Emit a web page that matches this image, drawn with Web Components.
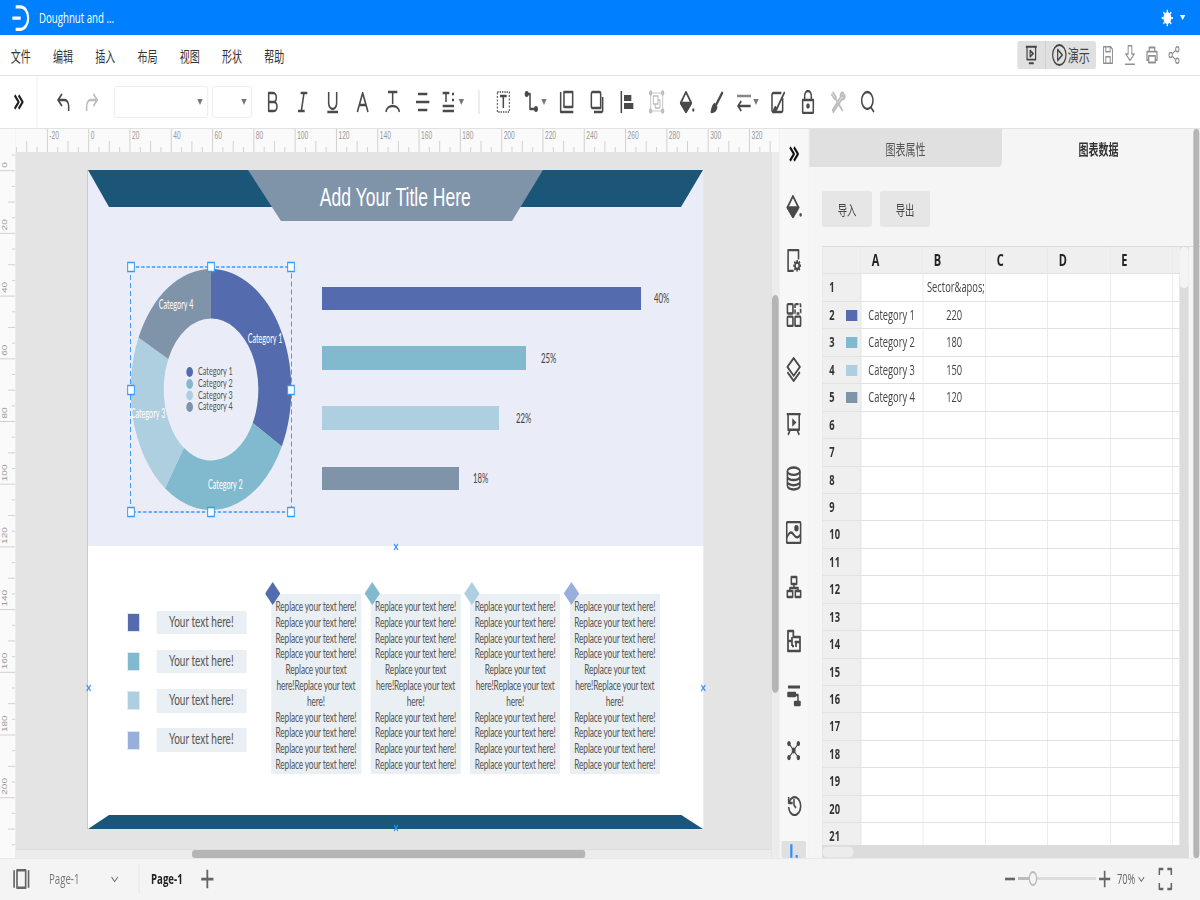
<!DOCTYPE html>
<html lang="zh">
<head>
<meta charset="utf-8">
<title>Doughnut and ...</title>
<style>
	html, body { margin: 0; width: 1200px; height: 900px; overflow: hidden; background: #f4f4f4; }
</style>
</head>
<body>
<app-root></app-root>
<script>
// the whole ui is laid out 1800 wide and squeezed to 1200 by .stage in app-root
const UI_FONT = '"Open Sans","Noto Sans CJK SC",sans-serif';

const ICONS = {
	logo: '<path d="M6 3h6a9 9 0 0 1 0 18H6M2 12h10" stroke-width="2.6"/>',
	sun: '<circle cx="12" cy="12" r="6" fill="currentColor"/><path d="M12 2v3M12 19v3M2 12h3M19 12h3M5 5l2 2M17 17l2 2M19 5l-2 2M7 17l-2 2"/>',
	present: '<path d="M3 3h18M5 3v14h14V3M10 7l5 3.5-5 3.5zM8 21h8"/>',
	play: '<circle cx="12" cy="12" r="10"/><path d="M9.5 6.5l7 5.5-7 5.5z"/>',
	save: '<path d="M4 2h13l3 3v17H4zM8 2v6h8V2M8 22v-8h8v8"/>',
	download: '<path d="M9 2h6v9h4l-7 7-7-7h4zM4 22h16"/>',
	print: '<path d="M7 8V3h10v5M5 18H3V8h18v10h-2M6 13h12v8H6z"/>',
	share: '<circle cx="18" cy="5" r="3"/><circle cx="6" cy="12" r="3"/><circle cx="18" cy="19" r="3"/><path d="M9 10.5l6-4M9 13.5l6 4"/>',
	collapse: '<path d="M4 3l8 9-8 9M12 3l8 9-8 9" stroke-width="3.6"/>',
	undo: '<path d="M10 4l-6 6 6 6M4 10h10a6 6 0 0 1 6 6v5"/>',
	redo: '<path d="M14 4l6 6-6 6M20 10H10a6 6 0 0 0-6 6v5"/>',
	bold: '<path d="M6 3h7a4.500 4.500 0 0 1 0 9H6zM6 12h8a4.500 4.500 0 0 1 0 9H6z"/>',
	italic: '<path d="M9 3h10M5 21h10M14 3l-4 18"/>',
	underline: '<path d="M6 2v11a6 6 0 0 0 12 0V2M4 22h16"/>',
	letter: '<path d="M4 22L12 3l8 19M7 15h10"/>',
	textcolor: '<path d="M5 2h14M12 2v12M2 22c1-8 19-8 20 0"/>',
	align: '<path d="M5 4h14M2 12h20M5 20h14"/>',
	textspace: '<path d="M2 3h10M7 3v9M16 4h3M16 10h3M2 16h17M2 21h17"/>',
	textbox: '<path d="M3 2h18v20H3z" stroke-dasharray="2 1.500" stroke-width="1.500"/><path d="M7 6h10M12 6v12"/>',
	connector: '<path d="M4 4h5v15h8"/><circle cx="4" cy="4" r="1.800" fill="currentColor"/><circle cx="18" cy="19" r="1.800" fill="currentColor"/>',
	front: '<path d="M3 2v20h19M8 2h13v15H8z"/>',
	back: '<path d="M4 4a2 2 0 0 1 2-2h10a2 2 0 0 1 2 2v14H6a2 2 0 0 1-2-2zM8 22h11a2 2 0 0 0 2-2V7"/>',
	alignleft: '<path d="M4 1v22"/><path d="M8 5h11v6H8zM8 13h14v6H8z" fill="currentColor" stroke="none"/>',
	group: '<path d="M4 3h16M4 21h16M3 4v16M21 4v16" stroke-width="1"/><path d="M7 6h7v8H7zM10 14v4h7v-8h-3" stroke-width="1.500"/><circle cx="3" cy="3" r="1.500"/><circle cx="21" cy="3" r="1.500"/><circle cx="3" cy="21" r="1.500"/><circle cx="21" cy="21" r="1.500"/>',
	bucket: '<path d="M11 2L3 13l8 9 8-9z"/><path d="M3 13h16l-8 9z" fill="currentColor"/><circle cx="22" cy="20" r="1.800" fill="currentColor" stroke="none"/>',
	brush: '<path d="M21 2L11 15" stroke-width="3"/><path d="M9 14c-3 1-4 4-5 8 3 0 7-1 8-5z" fill="currentColor"/>',
	arrows: '<path d="M2 6h20" stroke-dasharray="2 1"/><path d="M22 16H3M8 11l-5 5 5 5"/>',
	nofill: '<path d="M19 8v12a2 2 0 0 1-2 2H5a2 2 0 0 1-2-2V5a2 2 0 0 1 2-2h12M22 2L10 19"/><path d="M8 17c-2 1-2 3-3 5 2 0 4-1 5-3z" fill="currentColor"/>',
	lock: '<path d="M7 10V6a5 5 0 0 1 10 0v4M4 10h16v12a1 1 0 0 1-1 1H5a1 1 0 0 1-1-1z"/><circle cx="12" cy="16" r="1.500" fill="currentColor"/>',
	tools: '<path d="M4 2l5 5-2 2-5-5M8 8l11 13M20 3c-3-1-5 1-4 4L4 20l1 2L18 9c3 1 5-1 4-4l-2 2-2-1z"/>',
	search: '<circle cx="11" cy="10.500" r="8.500"/><path d="M16 17l5 5"/>',
	pagegear: '<path d="M12 22H4V2h15v9"/><circle cx="17" cy="17" r="3"/><path d="M17 11.500v2M17 20.500v2M11.500 17h2M20.500 17h2M13 13l1.500 1.500M19.500 19.500L21 21M21 13l-1.500 1.500M14.500 19.500L13 21"/>',
	grid: '<rect x="3" y="2" width="8" height="9" rx="1"/><rect x="14" y="2" width="8" height="9" rx="1" stroke-dasharray="4 1.500"/><rect x="3" y="14" width="8" height="9" rx="1"/><rect x="14" y="14" width="8" height="9" rx="1"/>',
	layers: '<path d="M12 1l9 8.500-9 8.500-9-8.500zM3 14.500l9 8.500 9-8.500"/>',
	board: '<path d="M2 3h20M4 3v15h16V3M7 18l-3 5M17 18l3 5"/><path d="M10 7l6 4-6 4z" fill="currentColor" stroke="none"/>',
	database: '<ellipse cx="12" cy="5" rx="9" ry="3.500"/><path d="M3 5v14c0 2 4 3.500 9 3.500s9-1.500 9-3.500V5M3 10c0 2 4 3.500 9 3.500s9-1.500 9-3.500M3 15c0 2 4 3.500 9 3.500s9-1.500 9-3.500"/>',
	image: '<rect x="2" y="2" width="20" height="20" rx="1"/><path d="M2 17c4-6 7-6 10-3s6 4 10 0"/><circle cx="16" cy="8" r="2" fill="currentColor"/>',
	org: '<rect x="8" y="2" width="8" height="7"/><rect x="2" y="16" width="8" height="6"/><rect x="14" y="16" width="8" height="6"/><path d="M12 9v4M6 16v-3h12v3"/>',
	plan: '<path d="M3 2h8v6h10v14H3z" stroke-width="2.600"/><path d="M3 12h6M9 8v9M13 13h8M15 13v5M9 17h3" stroke-width="2.600"/>',
	gantt: '<path d="M3 3h18" stroke-width="3"/><path d="M3 9h11v3H3zM13 18h8v3h-8z" fill="currentColor"/><path d="M15 11h3v7"/>',
	mind: '<circle cx="12" cy="12" r="2.500" fill="currentColor"/><circle cx="4" cy="4" r="2.200" fill="currentColor"/><circle cx="20" cy="4" r="2.200" fill="currentColor"/><circle cx="4" cy="20" r="2.200" fill="currentColor"/><circle cx="20" cy="20" r="2.200" fill="currentColor"/><path d="M4 4l16 16M20 4L4 20"/>',
	history: '<path d="M4 5v6h6"/><path d="M4.500 11A9 9 0 1 1 4 15"/><path d="M12 7v6l3 3"/>',
	chart: '<path d="M6 2v20" stroke-width="5"/><path d="M18 18v4" stroke-width="5"/>',
	pages: '<path d="M2 4v16M22 4v16M6 4h12v16H6z"/>',
	chevron: '<path d="M5 9l7 7 7-7"/>',
	plus: '<path d="M12 2v20M2 12h20" stroke-width="3"/>',
	minus: '<path d="M2 12h20" stroke-width="3.500"/>',
	full: '<path d="M3 8V2h6M15 2h6v6M21 16v6h-6M9 22H3v-6"/>'
};

// small helper so every element is a shadow root filled from its own template
function defineEl(name, css, html, extra) {
	const template = document.createElement('template');
	template.innerHTML = `<style>${css}</style>${html}`;
	customElements.define(name, class extends HTMLElement {
		constructor() {
			super();
			this.attachShadow({ mode: 'open' }).appendChild(template.content.cloneNode(true));
			if (extra) extra.call(this, this.shadowRoot);
		}
	});
}

defineEl('ui-icon', `
	:host { display: inline-flex; line-height: 0; }
	svg { fill: none; stroke: currentColor; stroke-width: 2.300; stroke-linecap: butt; stroke-linejoin: round; }
`, `<svg viewBox="0 0 24 24"></svg>`, function (root) {
	const svg = root.querySelector('svg');
	const size = this.getAttribute('size') || 24;
	svg.setAttribute('width', size);
	svg.setAttribute('height', size);
	if (this.hasAttribute('weight')) svg.style.strokeWidth = this.getAttribute('weight');
	svg.innerHTML = ICONS[this.getAttribute('name')] || '';
});

defineEl('tool-btn', `
	:host { display: flex; align-items: center; justify-content: center; flex: none; width: 45px; height: 52px; color: #4a4a4a; gap: 1px; }
	:host([off]) { color: #bdbdbd; }
	:host([wide]) { width: 50px; }
	i { width: 0; height: 0; border: 4.500px solid transparent; border-top: 6px solid #777; border-bottom: 0; margin-left: 1px; }
	:host(:not([caret])) i { display: none; }
`, `<slot></slot><i></i>`);

defineEl('font-select', `
	:host { display: flex; align-items: center; justify-content: flex-end; flex: none; height: 32px; padding-right: 7px; box-sizing: border-box; background: #fff; border: 1px solid #e8e8e8; border-radius: 4px; }
	i { width: 0; height: 0; border: 4.500px solid transparent; border-top: 6px solid #777; border-bottom: 0; }
`, `<i></i>`);

defineEl('title-bar', `
	:host { display: flex; align-items: center; flex: none; height: 35px; background: #0080ff; color: #fff; font: 14.500px ${UI_FONT}; }
	.logo { margin-left: 16px; }
	.name { margin-left: 12.500px; }
	.user { margin-left: auto; margin-right: 22px; display: flex; align-items: center; gap: 9px; }
	i { width: 0; height: 0; border: 4px solid transparent; border-top: 5px solid #fff; border-bottom: 0; }
`, `
	<ui-icon class="logo" name="logo" size="30"></ui-icon>
	<span class="name"><slot></slot></span>
	<div class="user"><ui-icon name="sun" size="20"></ui-icon><i></i></div>
`);

defineEl('menu-bar', `
	:host { display: flex; align-items: center; flex: none; height: 41px; box-sizing: border-box; padding-left: 16px; background: #fff; border-bottom: 1px solid #e4e4e4; color: #333; font: 15px ${UI_FONT}; }
	nav { display: flex; gap: 33.400px; }
	.right { margin-left: auto; display: flex; align-items: center; color: #8f8f8f; padding-right: 23px; }
	.present { display: flex; align-items: center; height: 28px; width: 118.500px; background: #e0e0e0; border-radius: 3px; color: #444; margin-right: 1px; font-size: 16.500px; }
	.present .a { display: flex; justify-content: center; width: 43px; border-right: 1px solid #c8c8c8; height: 28px; align-items: center; box-sizing: border-box; }
	.present .b { display: flex; align-items: center; gap: 1px; padding-left: 8px; }
	.ico { display: flex; justify-content: center; width: 33px; }
`, `
	<nav><slot></slot></nav>
	<div class="right">
		<div class="present">
			<div class="a"><ui-icon name="present" size="22" weight="2"></ui-icon></div>
			<div class="b"><ui-icon name="play" size="24" weight="1.800"></ui-icon><span>演示</span></div>
		</div>
		<div class="ico"><ui-icon name="save" size="20" weight="1.800"></ui-icon></div>
		<div class="ico"><ui-icon name="download" size="22" weight="1.600"></ui-icon></div>
		<div class="ico"><ui-icon name="print" size="20" weight="2.200"></ui-icon></div>
		<div class="ico"><ui-icon name="share" size="20" weight="1.800"></ui-icon></div>
	</div>
`);

defineEl('tool-bar', `
	:host { display: flex; align-items: center; flex: none; height: 53px; box-sizing: border-box; background: #fff; border-bottom: 1px solid #e2e2e2; }
	.head { display: flex; align-items: center; justify-content: center; width: 56px; height: 52px; box-sizing: border-box; border-right: 1px solid #e8e8e8; color: #222; flex: none; margin-right: 16.500px; }
	.sep { flex: none; width: 1px; height: 24px; background: #c8c8c8; margin: 0 14px 0 16px; }
	.gap1 { width: 11px; flex: none; }
	.gap2 { width: 6px; flex: none; }
	.gap3 { width: 9px; flex: none; }
`, `
	<div class="head"><ui-icon name="collapse" size="18"></ui-icon></div>
	<tool-btn style="width:44px"><ui-icon name="undo"></ui-icon></tool-btn>
	<tool-btn style="width:43px" off><ui-icon name="redo"></ui-icon></tool-btn>
	<div class="gap1"></div>
	<font-select style="width:141px"></font-select>
	<div class="gap2"></div>
	<font-select style="width:60px"></font-select>
	<div class="gap3"></div>
	<tool-btn><ui-icon name="bold"></ui-icon></tool-btn>
	<tool-btn><ui-icon name="italic"></ui-icon></tool-btn>
	<tool-btn><ui-icon name="underline"></ui-icon></tool-btn>
	<tool-btn><ui-icon name="letter"></ui-icon></tool-btn>
	<tool-btn><ui-icon name="textcolor"></ui-icon></tool-btn>
	<tool-btn><ui-icon name="align"></ui-icon></tool-btn>
	<tool-btn caret><ui-icon name="textspace"></ui-icon></tool-btn>
	<div class="sep"></div>
	<tool-btn><ui-icon name="textbox"></ui-icon></tool-btn>
	<tool-btn wide caret><ui-icon name="connector"></ui-icon></tool-btn>
	<tool-btn><ui-icon name="front"></ui-icon></tool-btn>
	<tool-btn><ui-icon name="back"></ui-icon></tool-btn>
	<tool-btn><ui-icon name="alignleft"></ui-icon></tool-btn>
	<tool-btn off><ui-icon name="group"></ui-icon></tool-btn>
	<tool-btn><ui-icon name="bucket"></ui-icon></tool-btn>
	<tool-btn><ui-icon name="brush"></ui-icon></tool-btn>
	<tool-btn caret style="width:47px"><ui-icon name="arrows"></ui-icon></tool-btn>
	<tool-btn><ui-icon name="nofill"></ui-icon></tool-btn>
	<tool-btn><ui-icon name="lock"></ui-icon></tool-btn>
	<tool-btn off><ui-icon name="tools"></ui-icon></tool-btn>
	<tool-btn><ui-icon name="search"></ui-icon></tool-btn>
`);

// ruler ticks are generated: a long tick and label every 20 units
function rulerSvg(horizontal, len, zero, unit) {
	const NS = 'http://www.w3.org/2000/svg';
	const svg = document.createElementNS(NS, 'svg');
	const depth = 23;
	svg.setAttribute('width', horizontal ? len : depth);
	svg.setAttribute('height', horizontal ? depth : len);
	let out = '';
	for (let v = -40; v <= 340; v += 5) {
		const p = zero + v * unit;
		if (p < 0 || p > len) continue;
		const long = v % 20 === 0;
		const size = long ? 23 : (v % 10 === 0 ? 11 : 5);
		if (horizontal) {
			out += `<path d="M${p} ${depth - size}V${depth}" stroke="#c9c9c9" fill="none"/>`;
			if (long) out += `<text x="${p + 3}" y="10" font-size="10" fill="#999">${v}</text>`;
		} else {
			out += `<path d="M${depth - size} ${p}H${depth}" stroke="#c9c9c9" fill="none"/>`;
			if (long) out += `<text transform="translate(10 ${p - 3}) rotate(-90)" font-size="10" fill="#999">${v}</text>`;
		}
	}
	svg.innerHTML = out;
	return svg;
}

defineEl('ruler-bar', `
	:host { display: block; background: #fafafa; overflow: hidden; line-height: 0; font-family: "Liberation Sans", sans-serif; }
`, ``, function (root) {
	const horizontal = this.getAttribute('dir') !== 'v';
	root.appendChild(horizontal
		? rulerSvg(true, 1145.5, 110, 3.0975)
		: rulerSvg(false, 706, 18.700, 3.135));
});

defineEl('dough-section', `
	:host { display: block; height: 376px; background: #eaedf7; font-family: Lato, "Open Sans", sans-serif; }
	svg { display: block; overflow: visible; }
`, `<svg width="922.500" height="376" viewBox="0 0 922.500 376"></svg>`, function (root) {
	const svg = root.querySelector('svg');
	const cx = 184.500, cy = 219.500, R = 120.500, r = 71;
	const data = [[220, '#546cae'], [180, '#81bace'], [150, '#aecfdf'], [120, '#7f94a9']];
	const sum = data.reduce((a, d) => a + d[0], 0);
	let ang = 0, out = '';
	// header ribbon
	out += `<polygon points="0,0 922.500,0 889.500,37 31.500,37" fill="#1b5678"/>`;
	out += `<polygon points="240,0 682.500,0 636,51 289.500,51" fill="#7f94a9"/>`;
	out += `<text x="461" y="36" text-anchor="middle" font-family="Liberation Sans" font-size="26.300" fill="#fff">Add Your Title Here</text>`;
	// doughnut
	for (const [v, col] of data) {
		const a0 = ang, a1 = ang + v / sum * Math.PI * 2;
		ang = a1;
		const pt = (rad, a) => `${(cx + rad * Math.sin(a)).toFixed(2)} ${(cy - rad * Math.cos(a)).toFixed(2)}`;
		const big = a1 - a0 > Math.PI ? 1 : 0;
		out += `<path fill="${col}" d="M${pt(R, a0)}A${R} ${R} 0 ${big} 1 ${pt(R, a1)}L${pt(r, a1)}A${r} ${r} 0 ${big} 0 ${pt(r, a0)}Z"/>`;
	}
	const white = [['Category 4', 132, 139], ['Category 1', 265.500, 173], ['Category 3', 90, 248], ['Category 2', 206, 319]];
	for (const [t, x, y] of white) {
		out += `<text x="${x}" y="${y}" text-anchor="middle" font-size="12.500" textLength="52" lengthAdjust="spacingAndGlyphs" fill="#fff">${t}</text>`;
	}
	const legend = [[202, '#546cae', 'Category 1'], [214, '#81bace', 'Category 2'], [225.500, '#aecfdf', 'Category 3'], [237, '#7f94a9', 'Category 4']];
	for (const [y, col, t] of legend) {
		out += `<circle cx="152.500" cy="${y}" r="5" fill="${col}"/>`;
		out += `<text x="165" y="${y + 3.500}" font-size="10.500" textLength="52" lengthAdjust="spacingAndGlyphs" fill="#555">${t}</text>`;
	}
	// bars
	const bars = [[117, 23, 478.500, '#546cae', '40%'], [176, 24, 306, '#81bace', '25%'], [236, 24, 265.500, '#aecfdf', '22%'], [297, 23, 205.500, '#7f94a9', '18%']];
	const labelX = [849, 679.500, 642, 577.500];
	bars.forEach(([y, h, w, col, t], i) => {
		out += `<rect x="351" y="${y}" width="${w}" height="${h}" fill="${col}"/>`;
		out += `<text x="${labelX[i]}" y="${y + h / 2 + 5}" font-size="13" textLength="23" lengthAdjust="spacingAndGlyphs" fill="#444">${t}</text>`;
	});
	// selection frame with its handles
	out += `<rect x="63.750" y="97" width="241.500" height="245" fill="none" stroke="#3399ff" stroke-width="1.400" stroke-dasharray="5 3"/>`;
	for (const hx of [64.500, 184.500, 304.500]) {
		for (const hy of [97, 220, 342]) {
			if (hx === 184.500 && hy === 220) continue;
			out += `<rect x="${hx - 5}" y="${hy - 4.500}" width="10" height="9" fill="#fff" stroke="#3399ff" stroke-width="1.500"/>`;
		}
	}
	svg.innerHTML = out;
});

defineEl('legend-row', `
	:host { display: flex; align-items: center; height: 23.500px; gap: 25.500px; }
	i { flex: none; width: 17px; height: 17px; outline: 1px solid #dfe6f2; }
	span { flex: none; width: 135px; height: 23.500px; line-height: 21px; background: #e9eff3; text-align: center; }
`, `<i></i><span><slot></slot></span>`, function (root) {
	root.querySelector('i').style.background = this.getAttribute('color');
});

defineEl('note-card', `
	:host { display: block; position: relative; flex: none; width: 135px; height: 180px; box-sizing: border-box; padding-top: 5px; background: #e9eff3; text-align: center; font-size: 12.500px; letter-spacing: -0.2px; line-height: 15.800px; white-space: nowrap; }
	b { position: absolute; left: -9px; top: -12px; width: 23px; height: 23px; clip-path: polygon(50% 0, 100% 50%, 50% 100%, 0 50%); }
`, `<b></b><slot></slot>`, function (root) {
	root.querySelector('b').style.background = this.getAttribute('color');
});

defineEl('note-section', `
	:host { display: flex; flex-direction: column; height: 283px; background: #fff; color: #555; font-family: Lato, "Open Sans", sans-serif; font-size: 15px; }
	.row { display: flex; padding: 48px 0 0 60px; box-sizing: border-box; height: 269px; }
	.legend { display: flex; flex-direction: column; gap: 15.800px; width: 178.500px; margin: 16.500px 36px 0 0; }
	.cards { display: flex; gap: 14.400px; align-items: flex-start; }
	svg { display: block; flex: none; }
`, `
	<div class="row">
		<div class="legend"><slot name="legend"></slot></div>
		<div class="cards"><slot></slot></div>
	</div>
	<svg width="922.500" height="14"><polygon points="31.500,0 890,0 922.500,14 0,14" fill="#1b5678"/></svg>
`);

defineEl('chart-page', `
	:host { display: block; position: relative; width: 922.500px; height: 659px; box-shadow: -1px 0 0 #bdbdbd; }
	u { position: absolute; width: 8px; height: 8px; }
	u svg { display: block; }
`, `
	<slot></slot>
	<u style="left:457.500px;top:373px"></u>
	<u style="left:-3px;top:514px"></u>
	<u style="left:918.500px;top:514px"></u>
	<u style="left:457.500px;top:654px"></u>
`, function (root) {
	root.querySelectorAll('u').forEach(m => {
		m.innerHTML = '<svg width="8" height="8"><path d="M1 1l6 6M7 1L1 7" stroke="#2f8fff" stroke-width="1.500"/></svg>';
	});
});

defineEl('canvas-area', `
	:host { display: grid; position: relative; grid-template-columns: 23px 1fr; grid-template-rows: 23px 1fr; width: 1168.500px; flex: none; background: #e4e4e4; overflow: hidden; }
	.corner { background: #fafafa; }
	.view { position: relative; overflow: hidden; padding: 18px 0 0 109px; }
	.vtrack { position: absolute; right: 0; top: 0; bottom: 0; width: 12px; background: #ececec; border-left: 1px solid #ddd; box-sizing: border-box; }
	.vthumb { position: absolute; right: 1px; top: 143px; height: 398px; width: 10px; background: #b5b5b5; border-radius: 5px; }
	.htrack { position: absolute; left: 0; right: 12px; bottom: 0; height: 9px; background: #ececec; border-top: 1px solid #ddd; box-sizing: border-box; }
	.hthumb { position: absolute; left: 265px; bottom: 0; height: 8px; width: 590px; background: #b5b5b5; border-radius: 4px; }
`, `
	<div class="corner"></div>
	<ruler-bar></ruler-bar>
	<ruler-bar dir="v"></ruler-bar>
	<div class="view">
		<slot></slot>
		<div class="vtrack"></div><div class="vthumb"></div>
		<div class="htrack"></div><div class="hthumb"></div>
	</div>
`);

defineEl('side-rail', `
	:host { display: flex; flex-direction: column; align-items: center; flex: none; width: 45px; background: #f7f7f7; border-right: 1px solid #e9e9e9; box-sizing: border-box; overflow: hidden; color: #4a4a4a; }
	div { display: flex; align-items: center; justify-content: center; flex: none; height: 54.400px; }
	.first { height: 50px; color: #111; }
	.on { width: 37px; height: 17px; margin-top: 9px; background: #e0e0e0; border-radius: 2px; color: #2f8fff; align-items: flex-start; padding-top: 2px; box-sizing: border-box; overflow: hidden; }
`, `
	<div class="first"><ui-icon name="collapse" size="18"></ui-icon></div>
	<div><ui-icon name="bucket" size="25"></ui-icon></div>
	<div><ui-icon name="pagegear" size="25"></ui-icon></div>
	<div><ui-icon name="grid" size="25"></ui-icon></div>
	<div><ui-icon name="layers" size="25"></ui-icon></div>
	<div><ui-icon name="board" size="25"></ui-icon></div>
	<div><ui-icon name="database" size="25"></ui-icon></div>
	<div><ui-icon name="image" size="25"></ui-icon></div>
	<div><ui-icon name="org" size="24"></ui-icon></div>
	<div><ui-icon name="plan" size="24"></ui-icon></div>
	<div><ui-icon name="gantt" size="24"></ui-icon></div>
	<div><ui-icon name="mind" size="21" weight="1.600"></ui-icon></div>
	<div><ui-icon name="history" size="24"></ui-icon></div>
	<div class="on"><ui-icon name="chart" size="16"></ui-icon></div>
`);

defineEl('data-table', `
	:host { display: block; height: 612px; overflow: hidden; position: relative; font: 14px ${UI_FONT}; color: #444; border-top: 1px solid #dcdcdc; box-sizing: border-box; }
	.grid { display: grid; grid-template-columns: 57.500px 93px 94.500px 93px 94px 93px 11px; grid-auto-rows: 27.450px; background: #fff; border-left: 1px solid #dcdcdc; box-sizing: border-box; width: 537px; }
	.c { border-right: 1.500px solid #e2e2e2; border-bottom: 1px solid #e2e2e2; box-sizing: border-box; padding-left: 6px; line-height: 26px; white-space: nowrap; overflow: hidden; }
	.h { background: #efefef; font-weight: 700; color: #222; font-size: 16.500px; padding-left: 16px; line-height: 25px; }
	.n { background: #efefef; font-weight: 700; color: #333; padding-left: 10px; position: relative; }
	.n i { position: absolute; left: 35px; top: 8px; width: 17px; height: 11px; }
	.m { text-align: center; padding-left: 0; }
	.p { padding-left: 11px; }
	.track { position: absolute; left: 537px; top: 0; bottom: 0; width: 13px; background: #dcdcdc; }
	.knob { position: absolute; left: 537px; top: 0; width: 13px; height: 41px; background: #f4f4f4; border-radius: 5px; }
	.hbar { position: absolute; left: 0; width: 550px; bottom: 0; height: 13px; background: #dcdcdc; }
	.hknob { position: absolute; left: 0; bottom: 0; width: 48px; height: 12px; background: #ececec; border: 1px solid #ddd; box-sizing: border-box; border-radius: 6px; }
`, `
	<div class="grid"></div>
	<div class="track"></div><div class="knob"></div>
	<div class="hbar"></div><div class="hknob"></div>
`, function (root) {
	const rows = { 1: ['', 'Sector&amp;apos;'], 2: ['Category 1', '220', '#546cae'], 3: ['Category 2', '180', '#81bace'], 4: ['Category 3', '150', '#aecfdf'], 5: ['Category 4', '120', '#7f94a9'] };
	let out = '<div class="c h"></div>';
	for (const col of ['A', 'B', 'C', 'D', 'E', '']) out += `<div class="c h">${col}</div>`;
	for (let r = 1; r <= 21; r++) {
		const d = rows[r] || ['', ''];
		out += `<div class="c n">${r}${d[2] ? `<i style="background:${d[2]}"></i>` : ''}</div>`;
		out += `<div class="c p">${d[0]}</div>`;
		out += `<div class="c ${r === 1 ? '' : 'm'}">${d[1]}</div>`;
		out += '<div class="c"></div>'.repeat(4);
	}
	root.querySelector('.grid').innerHTML = out;
});

defineEl('data-panel', `
	:host { display: flex; flex-direction: column; position: relative; flex: 1; background: #f5f5f5; font: 15px ${UI_FONT}; color: #555; overflow: hidden; }
	.tabs { display: flex; height: 38px; flex: none; }
	.tabs div { display: flex; align-items: center; justify-content: center; width: 289.500px; }
	.tabs .off { background: #e0e0e0; border-radius: 0 0 5px 0; }
	.tabs .on { font-weight: 700; color: #333; }
	.btns { display: flex; gap: 12px; padding: 24px 0 19px 19.500px; flex: none; }
	.btns span { display: flex; align-items: center; justify-content: center; width: 75px; height: 36px; background: #e6e6e6; border-radius: 3px; font-size: 14px; color: #444; }
	.tbl { padding-left: 19.500px; }
	.scroll { position: absolute; right: 1px; top: 0; bottom: 0; width: 9px; background: #b5b5b5; border-radius: 4px; }
`, `
	<div class="tabs"><div class="off">图表属性</div><div class="on">图表数据</div></div>
	<div class="btns"><span>导入</span><span>导出</span></div>
	<div class="tbl"><data-table></data-table></div>
	<div class="scroll"></div>
`);

defineEl('status-bar', `
	:host { display: flex; align-items: center; flex: none; height: 42px; box-sizing: border-box; padding-bottom: 2px; background: #f4f4f4; border-top: 1px solid #e8e8e8; color: #666; font: 14.500px ${UI_FONT}; }
	.pages { margin-left: 19px; }
	.cur { margin-left: 28.500px; color: #777; width: 90px; }
	.sep { width: 1px; height: 30px; background: #e0e0e0; margin: 0 18px 0 28px; }
	.act { font-weight: 700; color: #222; width: 73px; }
	.zoom { margin-left: auto; display: flex; align-items: center; margin-right: 40px; }
	.slider { position: relative; width: 117px; height: 3px; background: #dcdcdc; margin: 0 3px; }
	.slider::before { content: ""; position: absolute; left: 0; top: 0; width: 22px; height: 3px; background: #bbb; }
	.slider::after { content: ""; position: absolute; left: 16px; top: -6px; width: 9px; height: 11px; background: #f4f4f4; border: 2px solid #bbb; border-radius: 50%; }
	.pct { margin: 0 2px 0 8px; font-size: 14px; }
`, `
	<ui-icon class="pages" name="pages" size="26"></ui-icon>
	<span class="cur">Page-1</span>
	<ui-icon name="chevron" size="16" weight="1.800"></ui-icon>
	<div class="sep"></div>
	<span class="act">Page-1</span>
	<ui-icon name="plus" size="22"></ui-icon>
	<div class="zoom">
		<ui-icon name="minus" size="18"></ui-icon>
		<div class="slider"></div>
		<ui-icon name="plus" size="20"></ui-icon>
		<span class="pct">70%</span>
		<ui-icon name="chevron" size="14" weight="2"></ui-icon>
		<ui-icon name="full" size="24" style="margin-left:17px"></ui-icon>
	</div>
`);

const CARD_TEXT = `Replace your text here!<br>Replace your text here!<br>Replace your text here!<br>Replace your text here!<br>Replace your text<br>here!Replace your text<br>here!<br>Replace your text here!<br>Replace your text here!<br>Replace your text here!<br>Replace your text here!`;

defineEl('app-root', `
	:host { display: block; width: 1200px; height: 900px; overflow: hidden; font-family: ${UI_FONT}; }
	.stage { display: flex; flex-direction: column; width: 1800px; height: 900px; transform: scaleX(0.66666); transform-origin: 0 0; }
	.main { display: flex; height: 729px; flex: none; }
	a { text-decoration: none; color: inherit; }
`, `
	<div class="stage">
	<title-bar>Doughnut and ...</title-bar>
	<menu-bar><a>文件</a><a>编辑</a><a>插入</a><a>布局</a><a>视图</a><a>形状</a><a>帮助</a></menu-bar>
	<tool-bar></tool-bar>
	<div class="main">
		<canvas-area>
			<chart-page>
				<dough-section></dough-section>
				<note-section>
					<legend-row slot="legend" color="#546cae">Your text here!</legend-row>
					<legend-row slot="legend" color="#81bace">Your text here!</legend-row>
					<legend-row slot="legend" color="#aecfdf">Your text here!</legend-row>
					<legend-row slot="legend" color="#98aedb">Your text here!</legend-row>
					<note-card color="#546cae">${CARD_TEXT}</note-card>
					<note-card color="#81bace">${CARD_TEXT}</note-card>
					<note-card color="#aecfdf">${CARD_TEXT}</note-card>
					<note-card color="#98aedb">${CARD_TEXT}</note-card>
				</note-section>
			</chart-page>
		</canvas-area>
		<side-rail></side-rail>
		<data-panel></data-panel>
	</div>
	<status-bar></status-bar>
	</div>
`);
</script>
</body>
</html>
